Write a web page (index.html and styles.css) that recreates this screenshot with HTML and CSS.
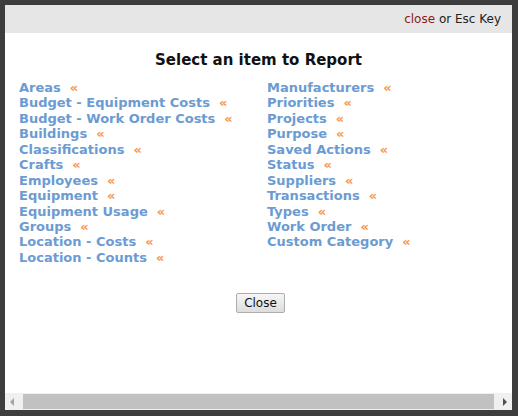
FILE: index.html
```html
<!DOCTYPE html>
<html lang="en">
<head>
    <meta charset="UTF-8">
    <title>Select an item to Report</title>
    <link rel="stylesheet" href="styles.css">
</head>
<body>
<div class="frame">
    <div class="topbar">
        <a class="close-link">close</a> or Esc Key
    </div>
    <div class="content">
        <h1>Select an item to Report</h1>
        <div class="lists">
            <ul class="items">
                <li><a>Areas</a><span class="arr">&laquo;</span></li>
                <li><a>Budget - Equipment Costs</a><span class="arr">&laquo;</span></li>
                <li><a>Budget - Work Order Costs</a><span class="arr">&laquo;</span></li>
                <li><a>Buildings</a><span class="arr">&laquo;</span></li>
                <li><a>Classifications</a><span class="arr">&laquo;</span></li>
                <li><a>Crafts</a><span class="arr">&laquo;</span></li>
                <li><a>Employees</a><span class="arr">&laquo;</span></li>
                <li><a>Equipment</a><span class="arr">&laquo;</span></li>
                <li><a>Equipment Usage</a><span class="arr">&laquo;</span></li>
                <li><a>Groups</a><span class="arr">&laquo;</span></li>
                <li><a>Location - Costs</a><span class="arr">&laquo;</span></li>
                <li><a>Location - Counts</a><span class="arr">&laquo;</span></li>
            </ul>
            <ul class="items">
                <li><a>Manufacturers</a><span class="arr">&laquo;</span></li>
                <li><a>Priorities</a><span class="arr">&laquo;</span></li>
                <li><a>Projects</a><span class="arr">&laquo;</span></li>
                <li><a>Purpose</a><span class="arr">&laquo;</span></li>
                <li><a>Saved Actions</a><span class="arr">&laquo;</span></li>
                <li><a>Status</a><span class="arr">&laquo;</span></li>
                <li><a>Suppliers</a><span class="arr">&laquo;</span></li>
                <li><a>Transactions</a><span class="arr">&laquo;</span></li>
                <li><a>Types</a><span class="arr">&laquo;</span></li>
                <li><a>Work Order</a><span class="arr">&laquo;</span></li>
                <li><a>Custom Category</a><span class="arr">&laquo;</span></li>
            </ul>
        </div>
        <div class="actions">
            <button class="btn">Close</button>
        </div>
    </div>
    <div class="hscroll">
        <span class="sarrow left"></span>
        <span class="thumb"></span>
        <span class="sarrow right"></span>
    </div>
</div>
</body>
</html>
```

FILE: styles.css
```css
body {
    margin: 0;
    background-color: #3d3d3d;
    font-family: "DejaVu Sans", Verdana, sans-serif;
}

.frame {
    box-sizing: border-box;
    width: 518px;
    height: 416px;
    border-style: solid;
    border-color: #3d3d3d;
    border-width: 5px 6px 6px 5px;
    display: flex;
    flex-direction: column;
    background-color: #ffffff;
}

.topbar {
    height: 28px;
    line-height: 28px;
    background-color: #e6e6e6;
    text-align: right;
    padding-right: 11px;
    font-size: 12px;
    color: #222;
}

.close-link {
    color: #8b1c1c;
}

.content {
    flex: 1;
    padding: 0 14px;
}

h1 {
    font-size: 15px;
    text-align: center;
    margin: 18px 0 11px;
    line-height: 18px;
    color: #111;
}

.lists {
    display: grid;
    grid-template-columns: 248px 1fr;
}

.items {
    margin: 0;
    padding: 0;
    list-style: none;
}

.items li {
    display: flex;
    align-items: baseline;
    height: 15.45px;
    font-size: 13px;
    font-weight: bold;
    line-height: 15px;
}

.items a {
    color: #6b9bd2;
}

.arr {
    color: #f7944a;
    margin-left: 9px;
    font-size: 13px;
}

.actions {
    text-align: center;
    margin-top: 27px;
}

.btn {
    font-family: "DejaVu Sans", Verdana, sans-serif;
    font-size: 12px;
    height: 20px;
    padding: 0 7px;
    margin-left: 4px;
    background: linear-gradient(#f6f6f6, #dddddd);
    border: 1px solid #adadad;
    border-radius: 2px;
    color: #111;
}

.hscroll {
    height: 17px;
    background-color: #f0f0f0;
    display: flex;
    align-items: center;
    padding: 0 2px;
}

.thumb {
    flex: 1;
    height: 15px;
    background-color: #c1c1c1;
    margin: 0 6px 0 6px;
}

.sarrow {
    width: 0;
    height: 0;
    border-top: 4px solid transparent;
    border-bottom: 4px solid transparent;
    margin: 0 3px;
}

.sarrow.left {
    border-right: 4px solid #a3a3a3;
}

.sarrow.right {
    border-left: 4px solid #505050;
}
```
